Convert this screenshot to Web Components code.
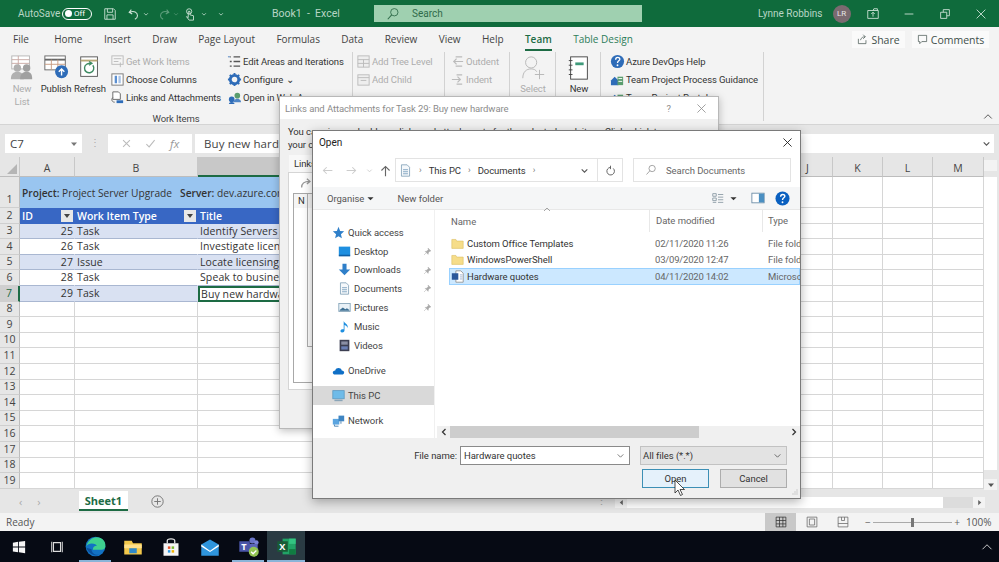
<!DOCTYPE html>
<html lang="en">
<head>
<meta charset="utf-8">
<title>Book1 - Excel</title>
<style>
  html, body { margin: 0; height: 100%; overflow: hidden; background: #fff; }
  body { font-family: "Open Sans", "Liberation Sans", sans-serif; }
  #page { position: relative; width: 999px; height: 562px; display: flex; flex-direction: column; overflow: hidden; }
</style>
</head>
<body>
<div id="page">
  <xl-titlebar></xl-titlebar>
  <xl-tabs></xl-tabs>
  <xl-ribbon></xl-ribbon>
  <xl-formula></xl-formula>
  <xl-grid></xl-grid>
  <xl-sheetbar></xl-sheetbar>
  <xl-status></xl-status>
  <xl-taskbar></xl-taskbar>
  <xl-links-dialog></xl-links-dialog>
  <xl-open-dialog></xl-open-dialog>
</div>
<script>
const FONT = '"Open Sans", "Liberation Sans", sans-serif';
const UI = 'Roboto, "Liberation Sans", sans-serif';

// small svg helper, everything is a 16 unit box unless a viewBox is given
const svg = (size, body, box = '0 0 16 16') =>
  `<svg width="${size}" height="${size}" viewBox="${box}" fill="none" style="display:block;flex:none">${body}</svg>`;

const ICONS = {
  save: '<path d="M2 2h10l2 2v10H2z M5 2v4h6V2 M4.500 14V9h7v5" stroke="#cfe4d8"/>',
  undo: '<path d="M5 3 2.500 6 6 8 M3 6c5-2 9 0 9 4 0 2-1 3-3 4" stroke="#cfe4d8" stroke-width="1.200"/>',
  redo: '<path d="M11 3l2.500 3L10 8 M13 6c-5-2-9 0-9 4 0 2 1 3 3 4" stroke="#5f9f7d" stroke-width="1.200"/>',
  touch: '<circle cx="7" cy="5" r="3" stroke="#cfe4d8"/><path d="M6 5v7l-2-1 3 4h5v-5l-4-1V5z" stroke="#cfe4d8"/>',
  search: '<circle cx="9.500" cy="6" r="4.200" stroke="#2f6b4a"/><path d="M6.500 9 2 14" stroke="#2f6b4a" stroke-width="1.200"/>',
  win: '<path d="M2 4h12v9H2z M8 4l1-2h4v2" stroke="#cfe4d8"/><path d="M8 11V6M6 8l2-2 2 2" stroke="#cfe4d8"/>',
  min: '<path d="M3 8h10" stroke="#cfe4d8"/>',
  restore: '<path d="M3 6h7v7H3z M6 6V3h7v7h-3" stroke="#cfe4d8"/>',
  close: '<path d="M3 3l10 10M13 3 3 13" stroke="#cfe4d8"/>',
  chev: '<path d="M3 6l5 5 5-5" stroke="#cfe4d8" stroke-width="2"/>',
  pin: '<path d="M9 2l5 5-2 .5-2.500 2.500-.5 3-5-5 3-.5L9.500 4.500z M5 11l-3 3" fill="#a9a9a9" stroke="#a9a9a9"/>',
  folder: '<path d="M1 3h5l1 2h8v9H1z" fill="#f6dd8a" stroke="#d9bb5e" stroke-width=".7"/>',
  word: '<path d="M6 1h6l3 3v11H6z" fill="#fff" stroke="#8b8b8b"/><rect x="1" y="4" width="8" height="8" fill="#2b579a"/><path d="M11 6h3M11 8.500h3M11 11h3" stroke="#8ca6cf"/>',
};

class XlTitlebar extends HTMLElement {
  constructor() {
    super();
    this.attachShadow({ mode: 'open' });
    this.shadowRoot.innerHTML = `
      <style>
        :host { display: flex; align-items: center; flex: none; height: 27px; background: #0f6b3c;
                color: #b9d6c5; font: 10px ${UI}; box-sizing: border-box; }
        .auto { width: 62px; padding-left: 18px; box-sizing: border-box; flex: none; }
        .toggle { width: 30px; height: 12px; border: 1px solid #fff; border-radius: 7px; flex: none;
                  display: flex; align-items: center; gap: 2px; font-size: 8px; color: #fff; padding-left: 2px; box-sizing: border-box; }
        .toggle i { width: 7px; height: 7px; border-radius: 50%; background: #fff; }
        .qa { display: flex; align-items: center; margin-left: 11px; width: 169px; flex: none; }
        .doc { width: 102px; flex: none; font-size: 10.500px; }
        .search { width: 268px; height: 17px; background: #9fd0b0; color: #2f6b4a; display: flex; align-items: center; flex: none;
                  gap: 12px; padding-left: 12px; box-sizing: border-box; }
        .user { margin-left: 116px; display: flex; align-items: center; width: 88px; flex: none; white-space: nowrap; }
        .avatar { width: 18px; height: 18px; border-radius: 50%; background: #7a6a70; color: #e5e5e5; font-size: 8px;
                  display: grid; place-items: center; margin-left: 10px; flex: none; }
        .win { display: flex; margin-left: 20px; gap: 22px; }
      </style>
      <span class="auto">AutoSave</span>
      <span class="toggle"><i></i>Off</span>
      <div class="qa">
        ${svg(14, ICONS.save)}
        <span style="margin-left:10px">${svg(14, ICONS.undo)}</span>
        <span style="margin-left:2px">${svg(6, ICONS.chev)}</span>
        <span style="margin-left:8px">${svg(14, ICONS.redo)}</span>
        <span style="margin-left:2px;opacity:.35">${svg(6, ICONS.chev)}</span>
        <span style="margin-left:4px">${svg(14, ICONS.touch)}</span>
        <span style="margin-left:4px">${svg(6, ICONS.chev)}</span>
        <span style="margin-left:11px">${svg(6, ICONS.chev)}</span>
      </div>
      <span class="doc">Book1 &nbsp;-&nbsp; Excel</span>
      <div class="search">${svg(14, ICONS.search)}<span>Search</span></div>
      <div class="user"><span>Lynne Robbins</span><span class="avatar">LR</span></div>
      <div class="win">${svg(14, ICONS.win)}${svg(14, ICONS.min)}${svg(14, ICONS.restore)}${svg(14, ICONS.close)}</div>
    `;
  }
}
customElements.define('xl-titlebar', XlTitlebar);

class XlTabs extends HTMLElement {
  constructor() {
    super();
    this.attachShadow({ mode: 'open' });
    const names = ['File', 'Home', 'Insert', 'Draw', 'Page Layout', 'Formulas', 'Data', 'Review', 'View', 'Help', 'Team', 'Table Design'];
    this.shadowRoot.innerHTML = `
      <style>
        :host { display: flex; flex: none; height: 25px; background: #f3f3f3; color: #444; font: 10px ${FONT};
                align-items: center; padding-left: 13px; box-sizing: border-box; }
        .tabs { display: flex; gap: 21.400px; flex: 1; }
        .tab { position: relative; line-height: 23px; }
        .tab:first-child { margin-right: 4px; }
        .team { color: #1d6b44; font-weight: 600; }
        .team::after { content: ''; position: absolute; left: 0; right: 0; bottom: 0; height: 2px; background: #1d6b44; }
        .design { color: #2d7d5a; }
        .btn { display: flex; align-items: center; gap: 3px; height: 17px; background: #fafafa; font-size: 10.500px; box-sizing: border-box;
               justify-content: center; color: #3f4f4a; }
        .share { width: 53px; margin-right: 7px; }
        .comments { width: 77px; margin-right: 10px; }
      </style>
      <div class="tabs">${names.map(n =>
        `<span class="tab ${n === 'Team' ? 'team' : n === 'Table Design' ? 'design' : ''}">${n}</span>`).join('')}</div>
      <div class="btn share">${svg(11, '<path d="M2 7v7h11v-5M5 9c1-4 4-5 7-5M9 1l3 3-3 3" stroke="#3f4f4a"/>')}Share</div>
      <div class="btn comments">${svg(11, '<path d="M2 2h12v9H7l-3 3v-3H2z" stroke="#3f4f4a"/>')}Comments</div>
    `;
  }
}
customElements.define('xl-tabs', XlTabs);

const RIBBON_ICONS = {
  newList: `<rect x="3" y="1" width="19" height="14" fill="#fff" stroke="#b5b5b5"/><path d="M3 5h19M3 9h19M10 1v14" stroke="#c9a9a4"/><circle cx="9" cy="14" r="4" fill="#b0b0b0"/><path d="M2 26c0-6 3-8 7-8s7 2 7 8z" fill="#b0b0b0"/><circle cx="19" cy="14" r="4" fill="#a0a0a0"/><path d="M12 26c0-6 3-8 7-8s6 2 6 8z" fill="#a0a0a0"/>`,
  publish: `<rect x="2" y="1" width="22" height="15" fill="#fff" stroke="#666"/><path d="M2 5h22" stroke="#666" stroke-width="2"/><path d="M2 10h22M9 5v11M16 5v11" stroke="#c89a80"/><circle cx="20" cy="18" r="7" fill="#2e6cb8"/><path d="M20 22v-7M17 18l3-3 3 3" stroke="#fff" stroke-width="1.500"/>`,
  refresh: `<rect x="4" y="2" width="18" height="21" fill="#fff" stroke="#555"/><path d="M4 6h18" stroke="#b9a878" stroke-width="2"/><path d="M17 11a5 5 0 1 1-2-1.500M13 7l3 2-3 2" stroke="#3d8a61" stroke-width="1.500"/>`,
  select: `<circle cx="12" cy="8" r="6" stroke="#b5b5b5"/><path d="M3 25c0-7 4-10 9-10 3 0 5 1 6 3M16 21h10M21 16v10" stroke="#b5b5b5"/>`,
  notebook: `<rect x="5" y="2" width="18" height="24" fill="#fff" stroke="#444"/><path d="M3 6h4M3 11h4M3 16h4M3 21h4" stroke="#444"/><rect x="10" y="8" width="9" height="3" fill="#3f9a7a"/>`,
};
const smallIcon = {
  get: '<rect x="2" y="2" width="12" height="9" fill="#f5f5f5" stroke="#bbb"/><path d="M4 5h8M4 8h5M11 9v5" stroke="#bbb"/>',
  cols: '<rect x="2" y="2" width="12" height="12" fill="#fff" stroke="#777"/><rect x="5" y="4" width="2.500" height="8" fill="#5b8fd0"/><rect x="9" y="4" width="2.500" height="8" fill="#a9c3e6"/>',
  links: '<path d="M3 2h6l2 2v6H3z" fill="#fff" stroke="#666"/><path d="M7 11h7v3H7z" fill="#2e6cb8"/><path d="M3 8c-2 2-1 5 2 5" stroke="#666"/>',
  edit: '<path d="M3 3h1M7 3h7M3 8h2M7 8h7M3 13h2M7 13h7" stroke="#555" stroke-width="1.400"/><path d="M1 2.500h2v1H1z" fill="#4a7fc0"/>',
  gear: '<circle cx="8" cy="8" r="4.500" stroke="#2e6cb8" stroke-width="3"/><path d="M8 1v2M8 13v2M1 8h2M13 8h2M3 3l1.500 1.500M11.500 11.500 13 13M13 3l-1.500 1.500M3 13l1.500-1.500" stroke="#2e6cb8" stroke-width="2"/>',
  web: '<circle cx="5" cy="10" r="3" fill="#2e6cb8"/><path d="M2 15c0-3 6-3 6 0z" fill="#2e6cb8"/><circle cx="11" cy="6" r="3" fill="#5a9d6e"/><path d="M7 13c0-5 8-5 8 0z" fill="#4f86c6"/>',
  tree: '<rect x="2" y="2" width="12" height="12" fill="#eee" stroke="#bbb"/><path d="M2 6h12M2 10h12M8 6v8" stroke="#bbb"/>',
  child: '<rect x="2" y="3" width="12" height="11" fill="#eee" stroke="#bbb"/><path d="M2 6h12M5 9h6" stroke="#bbb"/>',
  outdent: '<path d="M13 3H6M13 13H6M14 8H4M7 5 4 8l3 3" stroke="#bbb" stroke-width="1.300"/>',
  indent: '<path d="M13 3H7M7 13h6M2 8h9M8 5l3 3-3 3" stroke="#bbb" stroke-width="1.300"/>',
  help: '<circle cx="8" cy="8" r="7" fill="#2e6cb8"/><path d="M6 6c0-3 4.500-3 4.500-.500 0 1.800-2.500 1.800-2.500 4" stroke="#fff" stroke-width="1.400"/><circle cx="8" cy="12" r="1" fill="#fff"/>',
  team: '<path d="M1 14V9l4-4 4 4v5z" fill="#2e6cb8"/><path d="M8 14V5h6v9z" fill="#5a9d6e"/><path d="M9 7h4M9 10h4" stroke="#fff"/>',
};

class XlRibbon extends HTMLElement {
  constructor() {
    super();
    this.attachShadow({ mode: 'open' });
    const small = (icon, label, off) =>
      `<div class="s ${off ? 'off' : ''}">${svg(15, smallIcon[icon])}<span>${label}</span></div>`;
    const big = (icon, label, off, size = 28) =>
      `<div class="b ${off ? 'off' : ''}">${svg(size, RIBBON_ICONS[icon], '0 0 28 28')}<span>${label}</span></div>`;
    this.shadowRoot.innerHTML = `
      <style>
        :host { display: flex; position: relative; flex: none; height: 73px; background: #f3f3f3; color: #333;
                font: 9.500px ${UI}; letter-spacing: -.1px; border-bottom: 1px solid #d4d4d4; box-sizing: border-box; }
        .g { box-sizing: border-box; height: 69px; border-right: 1px solid #d2d2d2; flex: none; position: relative; }
        .items { display: flex; }
        .col { display: flex; flex-direction: column; flex: none; }
        .s { height: 18px; display: flex; align-items: center; gap: 1px; white-space: nowrap; }
        .off { color: #adadad; }
        .b { width: 34px; flex: none; display: flex; flex-direction: column; align-items: center; text-align: center;
             line-height: 13px; padding-top: 3px; box-sizing: border-box; gap: 1px; }
        .b svg { height: 26px; }
        .label { position: absolute; left: 0; right: 0; bottom: -3px; text-align: center; color: #444; }
        .up { position: absolute; right: 5px; bottom: 1px; }
      </style>
      <div class="g" style="width:353px;padding-left:5px">
        <div class="items">
          ${big('newList', 'New List', true)}
          ${big('publish', 'Publish')}
          ${big('refresh', 'Refresh')}
          <div class="col" style="width:117px;margin-left:3px">
            ${small('get', 'Get Work Items', true)}
            ${small('cols', 'Choose Columns')}
            ${small('links', 'Links and Attachments')}
          </div>
          <div class="col">
            ${small('edit', 'Edit Areas and Iterations')}
            <div class="s">${svg(15, smallIcon.gear)}<span>Configure ⌄</span></div>
            ${small('web', 'Open in Web Access')}
          </div>
        </div>
        <div class="label">Work Items</div>
      </div>
      <div class="g" style="width:92px;padding-left:3px">
        <div class="col">${small('tree', 'Add Tree Level', true)}${small('child', 'Add Child', true)}</div>
      </div>
      <div class="g" style="width:65px;padding-left:5px">
        <div class="col">${small('outdent', 'Outdent', true)}${small('indent', 'Indent', true)}</div>
      </div>
      <div class="g" style="width:46px;padding-left:6px">${big('select', 'Select', true)}</div>
      <div class="g" style="width:45px;padding-left:6px">${big('notebook', 'New')}</div>
      <div class="g" style="width:163px;padding-left:9px">
        <div class="col">
          ${small('help', 'Azure DevOps Help')}
          ${small('team', 'Team Project Process Guidance')}
          ${small('team', 'Team Project Portal')}
        </div>
      </div>
      <div class="up">${svg(12, '<path d="M3 10l5-5 5 5" stroke="#555" stroke-width="1.300"/>')}</div>
    `;
  }
}
customElements.define('xl-ribbon', XlRibbon);

class XlFormula extends HTMLElement {
  constructor() {
    super();
    this.attachShadow({ mode: 'open' });
    this.shadowRoot.innerHTML = `
      <style>
        :host { display: flex; flex: none; height: 32px; background: #e6e6e6; align-items: flex-start; padding: 9px 5px 0;
                box-sizing: border-box; color: #444; font: 11.500px ${FONT}; }
        .box { height: 19px; background: #fff; display: flex; align-items: center; box-sizing: border-box; }
        .name { width: 77px; padding: 0 4px 0 5px; justify-content: space-between; }
        .dots { width: 26px; text-align: center; color: #aaa; line-height: 17px; font-size: 10px; }
        .fx { width: 84px; justify-content: space-around; color: #999; font-style: italic; padding: 0 6px; }
        .input { flex: 1; margin-left: 3px; padding: 0 3px 0 9px; justify-content: space-between; letter-spacing: .1px; }
      </style>
      <div class="box name"><span>C7</span>${svg(8, '<path d="M2 5h12l-6 7z" fill="#777"/>')}</div>
      <div class="dots">⋮</div>
      <div class="box fx">
        ${svg(11, '<path d="M3 3l10 10M13 3 3 13" stroke="#bbb" stroke-width="1.500"/>')}
        ${svg(11, '<path d="M2 9l4 4 8-10" stroke="#bbb" stroke-width="1.500"/>')}
        <span>fx</span>
      </div>
      <div class="box input"><span>Buy new hardware</span>${svg(9, '<path d="M3 6l5 5 5-5" stroke="#555" stroke-width="2"/>')}</div>
    `;
  }
}
customElements.define('xl-formula', XlFormula);

class XlGrid extends HTMLElement {
  constructor() {
    super();
    this.attachShadow({ mode: 'open' });
    const data = [
      ['25', 'Task', 'Identify Servers'],
      ['26', 'Task', 'Investigate licensing'],
      ['27', 'Issue', 'Locate licensing'],
      ['28', 'Task', 'Speak to business'],
      ['29', 'Task', 'Buy new hardware'],
    ];
    const cols = ['A', 'B', '', 'J', 'K', 'L', 'M'];
    let cells = '<div class="ch corner"><i></i></div>';
    cols.forEach(c => { cells += `<div class="ch ${c === '' ? 'sel' : ''}">${c}</div>`; });

    // row 1: banner, row 2: table header
    cells += `<div class="rh r1">1</div>
      <div class="banner"><span><b>Project:</b> Project Server Upgrade</span><span class="srv"><b>Server:</b> dev.azure.com</span></div>
      <div class="c"></div><div class="c"></div><div class="c"></div><div class="c"></div>`;
    cells += `<div class="rh">2</div>
      <div class="hd">ID<em></em></div><div class="hd">Work Item Type<em></em></div><div class="hd">Title</div>
      <div class="c"></div><div class="c"></div><div class="c"></div><div class="c"></div>`;
    data.forEach(([id, type, title], i) => {
      const band = i % 2 === 0 ? 'band' : 'plain';
      const active = i === 4;
      cells += `<div class="rh ${active ? 'active' : ''}">${i + 3}</div>
        <div class="c ${band} num">${id}</div><div class="c ${band}">${type}</div>
        <div class="c ${band} ${active ? 'cur' : ''}">${title}</div>
        <div class="c"></div><div class="c"></div><div class="c"></div><div class="c"></div>`;
    });
    for (let r = 8; r <= 19; r++) {
      cells += `<div class="rh">${r}</div>` + '<div class="c"></div>'.repeat(7);
    }
    this.shadowRoot.innerHTML = `
      <style>
        :host { display: flex; flex: 1; min-height: 0; background: #e6e6e6; color: #333; font: 10.500px ${FONT}; }
        .sheet { width: 984px; flex: none; display: grid; align-content: start; overflow: hidden;
                 grid-template-columns: 20px 55px 123px 585px 50px 50px 50px 51px;
                 grid-template-rows: 20px 31px repeat(18, 15.600px); }
        .ch { background: #e6e6e6; display: grid; place-items: center; border-right: 1px solid #c8c8c8;
              border-bottom: 1px solid #bdbdbd; box-sizing: border-box; color: #444; padding-top: 2px; }
        .ch.sel { background: #c8c8c8; border-bottom: 2px solid #1d6b44; }
        .corner { position: relative; }
        .corner i { position: absolute; right: 2px; bottom: 2px; border: 5px solid #b5b5b5; border-top-color: transparent; border-left-color: transparent; }
        .rh { background: #e6e6e6; border-right: 1px solid #bdbdbd; border-bottom: 1px solid #cfcfcf; box-sizing: border-box;
              text-align: center; line-height: 15px; color: #444; font-size: 10.500px; display: flex; align-items: flex-end; justify-content: center; }
        .rh.active { background: #cfcfcf; border-right: 2px solid #1d6b44; color: #1d6b44; }
        .c { background: #fff; border-right: 1px solid #d6d6d6; border-bottom: 1px solid #d6d6d6; box-sizing: border-box;
             padding-left: 2px; line-height: 15px; white-space: nowrap; overflow: hidden; letter-spacing: .1px; }
        .band { background: #d9e1f2; border-right-color: #d9e1f2; border-bottom-color: #a9b7d1; }
        .plain { border-right-color: #fff; border-bottom-color: #a9b7d1; }
        .num { text-align: right; padding-right: 1px; }
        .cur { border: 2px solid #1d6b44; background: #fff; line-height: 12px; padding-left: 1px; }
        .banner { grid-column: span 3; background: #99c5f0; display: flex; align-items: center; padding: 0 2px; white-space: nowrap;
                  box-sizing: border-box; font-size: 10.200px; }
        .banner b { font-weight: 600; }
        .srv { margin-left: 8px; }
        .hd { background: #3867c4; color: #fff; font-weight: 600; padding-left: 2px; line-height: 16px; position: relative; white-space: nowrap; }
        .hd em { position: absolute; right: 2px; top: 2px; width: 12px; height: 12px; background: #e8e8e8; }
        .hd em::after { content: ''; position: absolute; left: 3px; top: 4px; border: 3px solid transparent; border-top: 4px solid #444; }
        .vbar { flex: 1; margin: 3px 2px 0 0; display: flex; flex-direction: column; height: 330px; }
        .vbar .arrow { height: 11px; background: #f3f3f3; display: grid; place-items: center; }
        .vbar .thumb { height: 293px; background: #fff; margin-top: 6px; }
        .vbar .track { flex: 1; }
      </style>
      <div class="sheet">${cells}</div>
      <div class="vbar">
        <div class="arrow"></div>
        <div class="thumb"></div>
        <div class="track"></div>
        <div class="arrow">${svg(8, '<path d="M2 5h12l-6 7z" fill="#555"/>')}</div>
      </div>
    `;
  }
}
customElements.define('xl-grid', XlGrid);

class XlSheetbar extends HTMLElement {
  constructor() {
    super();
    this.attachShadow({ mode: 'open' });
    this.shadowRoot.innerHTML = `
      <style>
        :host { display: flex; flex: none; height: 23px; background: #e6e6e6; align-items: flex-start; font: 11px ${FONT}; color: #aaa; box-sizing: border-box; }
        .nav { width: 79px; display: flex; gap: 15px; padding: 4px 0 0 19px; box-sizing: border-box; }
        .tab { width: 49px; height: 20px; margin-top: 1px; background: #fff; color: #1d6b44; font-weight: 700; text-align: center; line-height: 20px;
               border-bottom: 2px solid #1d6b44; box-sizing: border-box; }
        .add { margin: 5px 0 0 23px; }
        .dots { margin-left: 432px; padding-top: 3px; }
        .scroll { margin: 7px 0 0 8px; width: 370px; height: 11px; display: flex; align-items: stretch; background: #dcdcdc; }
        .arrow { width: 12px; background: #f3f3f3; display: grid; place-items: center; }
        .thumb { width: 316px; background: #fff; }
        .fill { flex: 1; }
      </style>
      <div class="nav"><span>‹</span><span>›</span></div>
      <div class="tab">Sheet1</div>
      <div class="add">${svg(13, '<circle cx="8" cy="8" r="7" stroke="#777" stroke-width="1.200"/><path d="M8 4v8M4 8h8" stroke="#777" stroke-width="1.200"/>')}</div>
      <div class="dots">⋮</div>
      <div class="scroll">
        <div class="arrow">${svg(7, '<path d="M11 2v12L4 8z" fill="#666"/>')}</div>
        <div class="thumb"></div>
        <div class="fill"></div>
        <div class="arrow">${svg(7, '<path d="M5 2v12l7-6z" fill="#666"/>')}</div>
      </div>
    `;
  }
}
customElements.define('xl-sheetbar', XlSheetbar);

class XlStatus extends HTMLElement {
  constructor() {
    super();
    this.attachShadow({ mode: 'open' });
    this.shadowRoot.innerHTML = `
      <style>
        :host { display: flex; flex: none; height: 18px; background: #f3f3f3; align-items: center; padding-left: 6px;
                font: 10px ${FONT}; color: #555; box-sizing: border-box; }
        .ready { width: 759px; }
        .view { width: 31px; height: 18px; display: grid; place-items: center; }
        .on { background: #c8c8c8; }
        .slider { margin-left: 7px; width: 95px; height: 18px; display: flex; align-items: center; gap: 2px; color: #666; }
        .line { flex: 1; height: 1px; background: #aaa; position: relative; }
        .line i { position: absolute; left: 38px; top: -4px; width: 3px; height: 9px; background: #777; }
        .pct { margin-left: 6px; }
      </style>
      <span class="ready">Ready</span>
      <div class="view on">${svg(12, '<path d="M1.500 1.500h13v13h-13zM1.500 6h13M1.500 10.500h13M6 1.500v13M10.500 1.500v13" stroke="#333"/>')}</div>
      <div class="view">${svg(12, '<path d="M1.500 1.500h13v13h-13zM4.500 4h7v8h-7z" stroke="#666"/>')}</div>
      <div class="view">${svg(12, '<path d="M1.500 1.500h13v13h-13zM1.500 10h13M6 1.500V6h4V1.500" stroke="#666"/>')}</div>
      <div class="slider"><span>−</span><div class="line"><i></i></div><span>+</span></div>
      <span class="pct">100%</span>
    `;
  }
}
customElements.define('xl-status', XlStatus);

class XlTaskbar extends HTMLElement {
  constructor() {
    super();
    this.attachShadow({ mode: 'open' });
    const slot = (body, cls = '', w = 38) => `<div class="t ${cls}" style="width:${w}px">${body}</div>`;
    this.shadowRoot.innerHTML = `
      <style>
        :host { display: flex; flex: none; height: 31px; background: #060a14; align-items: stretch; }
        .t { display: grid; place-items: center; position: relative; flex: none; }
        .run::after { content: ''; position: absolute; left: 3px; right: 3px; bottom: 0; height: 2px; background: #8ab4d8; }
        .active { background: #2a3b43; }
        .active.run::after { left: 0; right: 0; }
        .chev { margin-left: auto; margin-right: 6px; display: grid; place-items: center; }
        text { font: 700 9px ${FONT}; }
      </style>
      ${slot(svg(14, '<path d="M1 3l6-1v5.500H1zM8 2l7-1v6.500H8zM1 8.500h6V14l-6-1zM8 8.500h7V15l-7-1z" fill="#f5f5f5"/>'), '', 37)}
      ${slot(svg(14, '<path d="M4 3h8v10H4zM2 2v12M14 2v12" stroke="#dcdcdc" stroke-width="1.200"/>'), '', 39)}
      ${slot(svg(21, '<circle cx="8" cy="8" r="7.500" fill="#1272c4"/><path d="M1 8c1-4 4-7 8-7s7 3 6.500 7c0 2-2 2.500-4 2.500H6c0-2 1-3 3-3 0-2-7-3-8 .5z" fill="#3fd08f"/><path d="M5 10c0 3 3 5 6 4-3 2-8 0-10-5z" fill="#0a4f9c"/>'), 'run', 38)}
      ${slot(svg(20, '<path d="M1 3h6l1 2h7v9H1z" fill="#f2c84b"/><path d="M1 6h14v3H1z" fill="#ffe08a"/><path d="M5 9h6v4H5z" fill="#2f89c9"/>'))}
      ${slot(svg(20, '<path d="M5 5V3c0-2 6-2 6 0v2" stroke="#e8e8e8"/><path d="M2 5h12v10H2z" fill="#f5f5f5"/><path d="M5.500 7.500h2v2h-2z" fill="#e8542b"/><path d="M8.500 7.500h2v2h-2z" fill="#79b92e"/><path d="M5.500 10.500h2v2h-2z" fill="#2f9ae0"/><path d="M8.500 10.500h2v2h-2z" fill="#f4b400"/>'))}
      ${slot(svg(20, '<path d="M1 6l7-4 7 4v9H1z" fill="#2f95dc"/><path d="M1 6l7 5 7-5v1.500L8 12 1 7.500z" fill="#fff"/>'), '', 39)}
      ${slot(svg(21, '<circle cx="11" cy="3.500" r="2.300" fill="#6a75c8"/><circle cx="14" cy="5" r="1.700" fill="#7b83d8"/><path d="M8 6h7v5H8z" fill="#5b65b8"/><rect x="1" y="4" width="8" height="8" fill="#4a55a8"/><text x="2.500" y="10.500" fill="#fff" style="font-size:7px">T</text><circle cx="12" cy="12" r="3.800" fill="#92c353"/><path d="M10 12l1.500 1.500L14 11" stroke="#fff"/>'), 'run', 38)}
      ${slot(svg(21, '<rect x="5" y="2" width="10" height="12" fill="#21a366"/><rect x="10" y="2" width="5" height="4" fill="#33c481"/><rect x="10" y="10" width="5" height="4" fill="#107c41"/><rect x="1" y="4" width="8" height="8" fill="#185c37"/><text x="2.500" y="10.500" fill="#fff" style="font-size:7px">X</text>'), 'run active', 38)}
      <div class="chev">${svg(12, '<path d="M2 11l6-6 6 6" stroke="#dcdcdc" stroke-width="1.200"/>')}</div>
    `;
  }
}
customElements.define('xl-taskbar', XlTaskbar);

class XlLinksDialog extends HTMLElement {
  constructor() {
    super();
    this.attachShadow({ mode: 'open' });
    this.shadowRoot.innerHTML = `
      <style>
        :host { position: absolute; left: 279px; top: 96px; width: 440px; height: 333px; display: flex; flex-direction: column;
                background: #f0f0f0; border: 1px solid #b8b8b8; box-sizing: border-box; box-shadow: 0 2px 8px rgba(0,0,0,.25);
                font: 9.500px ${UI}; letter-spacing: -.1px; color: #333; }
        .title { height: 22px; background: #fff; display: flex; align-items: center; padding: 0 10px 0 5px; color: #8c8c8c; flex: none; }
        .title span:first-child { flex: 1; }
        .q { margin-right: 24px; }
        .text { padding: 6px 8px 0; line-height: 13px; height: 33px; box-sizing: border-box; white-space: nowrap; overflow: hidden; flex: none; }
        .tab { margin: 3px 0 0 9px; width: 60px; height: 17px; line-height: 17px; padding-left: 5px; background: #f8f8f8; box-sizing: border-box; flex: none; }
        .panel { margin: 0 8px; background: #fff; border: 1px solid #d5d5d5; height: 218px; box-sizing: border-box; flex: none; padding: 4px; }
        .panel svg { margin-left: 6px; }
        .list { margin-top: 2px; height: 190px; border: 1px solid #a8a8a8; box-sizing: border-box; position: relative; }
        .list span { display: block; padding: 0 0 0 4px; line-height: 14px; background: #f5f5f5; }
        .inner { position: absolute; left: 13px; top: 0; width: 300px; height: 152px; border: 1px solid #b0b0b0; border-top: 0; }
      </style>
      <div class="title"><span>Links and Attachments for Task 29: Buy new hardware</span><span class="q">?</span>${svg(13, '<path d="M3 3l10 10M13 3 3 13" stroke="#8c8c8c"/>')}</div>
      <div class="text">You can view and add new links and attachments for the selected work item. Click a Link to<br>your computer</div>
      <div class="tab">Links</div>
      <div class="panel">
        ${svg(14, '<path d="M3 12c0-5 3-7 9-7M9 2l3.500 3L9 8" stroke="#999" stroke-width="1.500"/>')}
        <div class="list"><span>N</span><div class="inner"></div></div>
      </div>
    `;
  }
}
customElements.define('xl-links-dialog', XlLinksDialog);

class XlOpenDialog extends HTMLElement {
  constructor() {
    super();
    this.attachShadow({ mode: 'open' });
    const navIcons = {
      star: '<path d="M8 1l2 5 5 .5-4 3.500 1.200 5L8 12.500 3.800 15 5 10 1 6.500 6 6z" fill="#2f7fc9"/>',
      desktop: '<rect x="1" y="2" width="14" height="11" fill="#1e8fe0"/><path d="M1 13h14" stroke="#0f5fa5" stroke-width="2"/>',
      down: '<path d="M5.500 1h5v7H15l-7 7-7-7h4.500z" fill="#2f7fc9"/>',
      docs: '<path d="M3 1h7l3 3v11H3z" fill="#f5f8fb" stroke="#7f9fb5"/><path d="M5 7h6M5 9.500h6M5 12h6" stroke="#6f97b8"/>',
      pics: '<rect x="1" y="3" width="14" height="10" fill="#e9f1f7" stroke="#7f9fb5"/><path d="M2 11l4-3 3 2 2-1 3 2v1H2z" fill="#3c6f93"/>',
      music: '<path d="M7 1c0 3 6 4 5 9-.5-2-2-3.500-4-4v7c0 3-5 3-5 .5S6 11 7 11.500z" fill="#1e8fe0"/>',
      videos: '<rect x="2" y="1" width="12" height="14" fill="#3c3f52"/><path d="M4 3h8v4H4z" fill="#8a8fa5"/><path d="M4 9h8v4H4z" fill="#6a7fb5"/>',
      cloud: '<path d="M4 13c-4 0-4-5 0-5 1-4 7-4 8 0 4 0 4 5 0 5z" fill="#0f6fc6"/>',
      pc: '<rect x="1" y="2" width="14" height="10" fill="#6fbbe8" stroke="#5d9ac2"/><path d="M3 14h10" stroke="#8aa5b8" stroke-width="2"/>',
      net: '<rect x="1" y="6" width="8" height="7" fill="#5ba5e0"/><rect x="8" y="2" width="7" height="7" fill="#3f85c2"/><path d="M3 13v2h5M11 9v3" stroke="#2f6fa5"/>',
    };
    const navRow = (icon, label, opts = {}) => `
      <div class="nav-row ${opts.sub ? 'sub' : ''} ${opts.sel ? 'sel' : ''} ${opts.gap ? 'gap' : ''}">
        ${svg(13, navIcons[icon])}<span>${label}</span>
        ${opts.pin ? `<span class="pin">${svg(9, ICONS.pin)}</span>` : ''}
      </div>`;
    const fileRow = (icon, name, date, type, sel) => `
      <div class="file ${sel ? 'sel' : ''}">
        <span class="n">${svg(13, ICONS[icon])}<span>${name}</span></span>
        <span class="d">${date}</span><span class="t">${type}</span>
      </div>`;
    this.shadowRoot.innerHTML = `
      <style>
        :host { position: absolute; left: 312px; top: 130px; width: 489px; height: 369px; display: flex; flex-direction: column;
                background: #fff; border: 1px solid #7a7a7a; box-sizing: border-box; box-shadow: 0 3px 10px rgba(0,0,0,.3);
                font: 9.500px ${UI}; letter-spacing: -.05px; color: #333; overflow: visible; }
        .title { height: 22px; display: flex; align-items: center; justify-content: space-between; padding: 0 6px; flex: none; color: #222; font-size: 10px; }
        .bar { height: 34px; display: flex; align-items: center; flex: none; padding-left: 2px; box-sizing: border-box; }
        .arr { width: 24px; display: grid; place-items: center; flex: none; }
        .addr { width: 228px; height: 24px; border: 1px solid #e3e3e3; display: flex; align-items: center; box-sizing: border-box; padding-left: 3px; gap: 7px; flex: none; }
        .addr .end { margin-left: auto; display: flex; height: 100%; align-items: center; }
        .addr .rf { width: 24px; height: 100%; border-left: 1px solid #e3e3e3; display: grid; place-items: center; margin-left: 8px; }
        .sm { color: #777; font-size: 9px; }
        .find { margin-left: 10px; width: 158px; height: 24px; border: 1px solid #e3e3e3; box-sizing: border-box; display: flex; align-items: center; gap: 9px; padding-left: 11px; color: #666; flex: none; }
        .tools { height: 23px; background: #f5f6f7; display: flex; align-items: center; flex: none; padding-left: 14px; color: #555; border-bottom: 1px solid #e8e8e8; box-sizing: border-box; }
        .tools .folder { margin-left: 24px; }
        .tools .right { margin-left: auto; display: flex; align-items: center; gap: 10px; padding-right: 10px; }
        .main { flex: 1; display: flex; min-height: 0; }
        .side { width: 122px; flex: none; padding-top: 13px; box-sizing: border-box; border-right: 1px solid #f0f0f0; }
        .nav-row { height: 18.800px; display: flex; align-items: center; gap: 3px; padding-left: 19px; position: relative; color: #444; box-sizing: border-box; }
        .nav-row.sub { padding-left: 25px; gap: 3px; }
        .nav-row.gap { margin-top: 6.300px; }
        .nav-row.sel { background: #d9d9d9; }
        .pin { position: absolute; left: 110px; top: 5px; }
        .list { flex: 1; min-width: 0; display: flex; flex-direction: column; position: relative; }
        .cols { height: 22px; display: flex; align-items: center; color: #666; flex: none; position: relative; margin-left: 14px; }
        .cols .caret { position: absolute; left: 94px; top: -4px; }
        .cols span { flex: none; }
        .cn { width: 200px; padding-left: 2px; box-sizing: border-box; }
        .cd { width: 113px; padding-left: 6px; border-left: 1px solid #e8e8e8; box-sizing: border-box; line-height: 22px; }
        .ct { padding-left: 5px; border-left: 1px solid #e8e8e8; line-height: 22px; }
        .files { flex: 1; padding-top: 3px; overflow: hidden; }
        .file { height: 16.500px; margin-left: 14px; display: flex; align-items: center; white-space: nowrap; box-sizing: border-box; border: 1px solid transparent; color: #333; }
        .file.sel { background: #cce8ff; border-color: #99d1ff; }
        .file .n { width: 200px; display: flex; align-items: center; gap: 3px; padding-left: 1px; box-sizing: border-box; flex: none; }
        .file .d { width: 113px; padding-left: 5px; color: #666; box-sizing: border-box; flex: none; letter-spacing: -.2px; }
        .file .t { padding-left: 5px; color: #666; flex: none; }
        .hs { height: 12px; display: flex; align-items: stretch; background: #f0f0f0; flex: none; margin-left: 2px; }
        .hs .a { width: 13px; display: grid; place-items: center; }
        .hs .th { width: 249px; background: #cdcdcd; }
        .hs .sp { flex: 1; }
        .foot { height: 60px; flex: none; background: #f0f0f0; padding-right: 13px; box-sizing: border-box; position: relative; }
        .r1 { display: flex; justify-content: flex-end; align-items: center; padding-top: 8px; height: 19px; box-sizing: content-box; }
        .inp { width: 170px; height: 19px; margin-left: 3px; background: #fff; border: 1px solid #8a8a8a; box-sizing: border-box; display: flex; align-items: center; justify-content: space-between; padding: 0 4px 0 3px; }
        .sel2 { width: 147px; height: 19px; margin-left: 10px; background: #e3e3e3; border: 1px solid #c2c2c2; box-sizing: border-box; display: flex; align-items: center; justify-content: space-between; padding: 0 4px 0 2px; }
        .r2 { display: flex; justify-content: flex-end; gap: 11px; margin-top: 4px; }
        .btn { width: 67px; height: 19px; background: #e1e1e1; border: 1px solid #adadad; box-sizing: border-box; display: grid; place-items: center; }
        .btn.hot { background: #e5f1fb; border-color: #3c8fb5; }
        .cursor { position: absolute; left: 360px; top: 42px; }
        .grip { position: absolute; right: 2px; bottom: 2px; }
      </style>
      <div class="title"><span>Open</span>${svg(13, '<path d="M3 3l10 10M13 3 3 13" stroke="#222" stroke-width="1.100"/>')}</div>
      <div class="bar">
        <div class="arr">${svg(13, '<path d="M14 8H3M7 4 3 8l4 4" stroke="#ccc" stroke-width="1.300"/>')}</div>
        <div class="arr">${svg(13, '<path d="M2 8h11M9 4l4 4-4 4" stroke="#ccc" stroke-width="1.300"/>')}</div>
        <div class="arr" style="width:12px">${svg(7, '<path d="M3 6l5 5 5-5" stroke="#ccc" stroke-width="2"/>')}</div>
        <div class="arr" style="width:20px">${svg(13, '<path d="M8 15V3M3 8l5-5 5 5" stroke="#666" stroke-width="1.400"/>')}</div>
        <div class="addr">
          ${svg(13, navIcons.docs)}<span class="sm">›</span><span>This PC</span><span class="sm">›</span><span>Documents</span><span class="sm">›</span>
          <div class="end">${svg(9, '<path d="M3 6l5 5 5-5" stroke="#555" stroke-width="2"/>')}
            <div class="rf">${svg(11, '<path d="M12 5a5.500 5.500 0 1 1-4-1.500M8 1v5" stroke="#555" stroke-width="1.300"/>')}</div></div>
        </div>
        <div class="find">${svg(12, '<circle cx="9.500" cy="6" r="4.200" stroke="#888"/><path d="M6.500 9 2 14" stroke="#888"/>')}<span>Search Documents</span></div>
      </div>
      <div class="tools">
        <span>Organise</span>&nbsp;${svg(7, '<path d="M1 5h14l-7 7z" fill="#333"/>')}
        <span class="folder">New folder</span>
        <div class="right">
          <span style="display:flex;gap:5px;align-items:center;margin-right:4px">${svg(14, '<path d="M2 3h4v3H2zM2 8h4v3H2zM2 13h4M8 4h6M8 7h6M8 10h6M8 13h6" stroke="#8a9aa5"/>')}${svg(7, '<path d="M1 5h14l-7 7z" fill="#333"/>')}</span>
          ${svg(14, '<rect x="1" y="2.500" width="14" height="11" fill="#fff" stroke="#6a8aa5"/><rect x="9" y="3" width="6" height="10" fill="#4a8fc2"/>')}
          ${svg(15, '<circle cx="8" cy="8" r="7.500" fill="#0a60c0"/><path d="M6 6c0-3 4.500-3 4.500-.500 0 1.800-2.500 1.800-2.500 4" stroke="#fff" stroke-width="1.500"/><circle cx="8" cy="12" r="1" fill="#fff"/>')}
        </div>
      </div>
      <div class="main">
        <div class="side">
          ${navRow('star', 'Quick access')}
          ${navRow('desktop', 'Desktop', { sub: 1, pin: 1 })}
          ${navRow('down', 'Downloads', { sub: 1, pin: 1 })}
          ${navRow('docs', 'Documents', { sub: 1, pin: 1 })}
          ${navRow('pics', 'Pictures', { sub: 1, pin: 1 })}
          ${navRow('music', 'Music', { sub: 1 })}
          ${navRow('videos', 'Videos', { sub: 1 })}
          ${navRow('cloud', 'OneDrive', { gap: 1 })}
          ${navRow('pc', 'This PC', { gap: 1, sel: 1 })}
          ${navRow('net', 'Network', { gap: 1 })}
        </div>
        <div class="list">
          <div class="cols">
            <span class="caret">${svg(8, '<path d="M2 10l6-6 6 6" stroke="#888" stroke-width="1.500"/>')}</span>
            <span class="cn">Name</span><span class="cd">Date modified</span><span class="ct">Type</span>
          </div>
          <div class="files">
            ${fileRow('folder', 'Custom Office Templates', '02/11/2020 11:26', 'File folder')}
            ${fileRow('folder', 'WindowsPowerShell', '03/09/2020 12:47', 'File folder')}
            ${fileRow('word', 'Hardware quotes', '04/11/2020 14:02', 'Microsoft Word Document', true)}
          </div>
          <div class="hs">
            <div class="a">${svg(8, '<path d="M11 2 5 8l6 6" stroke="#333" stroke-width="2.500"/>')}</div>
            <div class="th"></div><div class="sp"></div>
            <div class="a">${svg(8, '<path d="M5 2l6 6-6 6" stroke="#333" stroke-width="2.500"/>')}</div>
          </div>
        </div>
      </div>
      <div class="foot">
        <div class="r1">
          <span>File name:</span>
          <div class="inp"><span>Hardware quotes</span>${svg(9, '<path d="M3 6l5 5 5-5" stroke="#666" stroke-width="1.500"/>')}</div>
          <div class="sel2"><span>All files (*.*)</span>${svg(9, '<path d="M3 6l5 5 5-5" stroke="#555" stroke-width="1.500"/>')}</div>
        </div>
        <div class="r2"><div class="btn hot">Open</div><div class="btn">Cancel</div></div>
        <div class="cursor">${svg(16, '<path d="M2 0v13l3-3 2.500 5.500 2-1L7 9.500h4.500z" fill="#fff" stroke="#222" stroke-width=".8"/>')}</div>
        <div class="grip">${svg(8, '<path d="M13 3h2v2h-2zM9 7h2v2H9zM13 7h2v2h-2zM5 11h2v2H5zM9 11h2v2H9zM13 11h2v2h-2z" fill="#aaa"/>')}</div>
      </div>
    `;
  }
}
customElements.define('xl-open-dialog', XlOpenDialog);
</script>
</body>
</html>
